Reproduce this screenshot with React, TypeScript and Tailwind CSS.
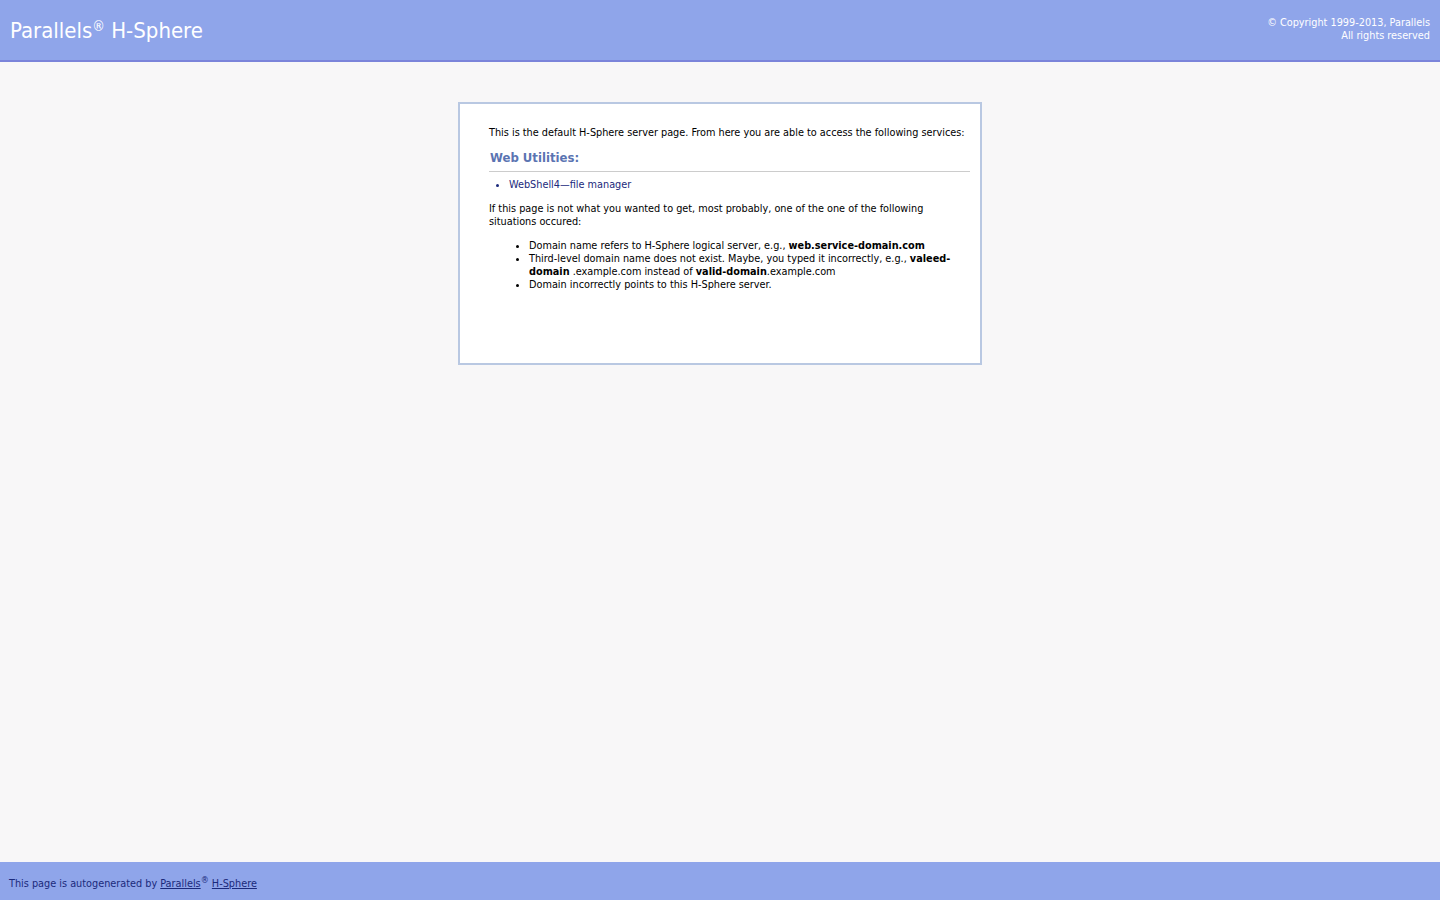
const font = { fontFamily: "Tahoma, 'DejaVu Sans Condensed', 'DejaVu Sans', sans-serif" };

export default function App() {
  return (
    <div className="flex min-h-screen flex-col bg-[#f8f7f8] text-[10.8px] leading-[13px] text-black" style={font}>
      <header className="flex h-[62px] items-start justify-between border-b-2 border-[#7b84da] bg-[#8fa5ea] text-white">
        <div className="pl-[10px] pt-[18px] text-[22px] leading-[26px]">
          Parallels<sup className="text-[14px]">®</sup> H-Sphere
        </div>
        <div className="pr-[10px] pt-[16px] text-right leading-[13px]">
          <div>© Copyright 1999-2013, Parallels</div>
          <div>All rights reserved</div>
        </div>
      </header>

      <main className="flex flex-1 justify-center pt-[40px]">
        <div className="h-[263px] w-[524px] border-2 border-[#b9c8e2] bg-white pl-[29px] pr-[10px] pt-[22px]">
          <p>This is the default H-Sphere server page. From here you are able to access the following services:</p>
          <h2 className="mt-[11px] border-b border-[#cccccc] pb-[5px] pl-[1px] text-[13px] font-bold leading-[16px] text-[#5b74b2]">
            Web Utilities:
          </h2>
          <ul className="mt-[6px] list-disc pl-[20px] text-[#1b2a7c]">
            <li>
              <a href="#" className="text-[#1b2a7c]">WebShell4—file manager</a>
            </li>
          </ul>
          <p className="mt-[11px]">
            If this page is not what you wanted to get, most probably, one of the one of the following situations occured:
          </p>
          <ul className="mt-[11px] list-disc pl-[40px]">
            <li>
              Domain name refers to H-Sphere logical server, e.g., <b>web.service-domain.com</b>
            </li>
            <li>
              Third-level domain name does not exist. Maybe, you typed it incorrectly, e.g., <b>valeed-domain</b> .example.com instead of <b>valid-domain</b>.example.com
            </li>
            <li>Domain incorrectly points to this H-Sphere server.</li>
          </ul>
        </div>
      </main>

      <footer className="flex h-[38px] items-center bg-[#8fa5ea] pl-[9px] pt-[5px] text-[#1b2a7c]">
        <span>
          This page is autogenerated by <a href="#" className="underline">Parallels</a>
          <sup className="text-[9px]">®</sup> <a href="#" className="underline">H-Sphere</a>
        </span>
      </footer>
    </div>
  );
}
